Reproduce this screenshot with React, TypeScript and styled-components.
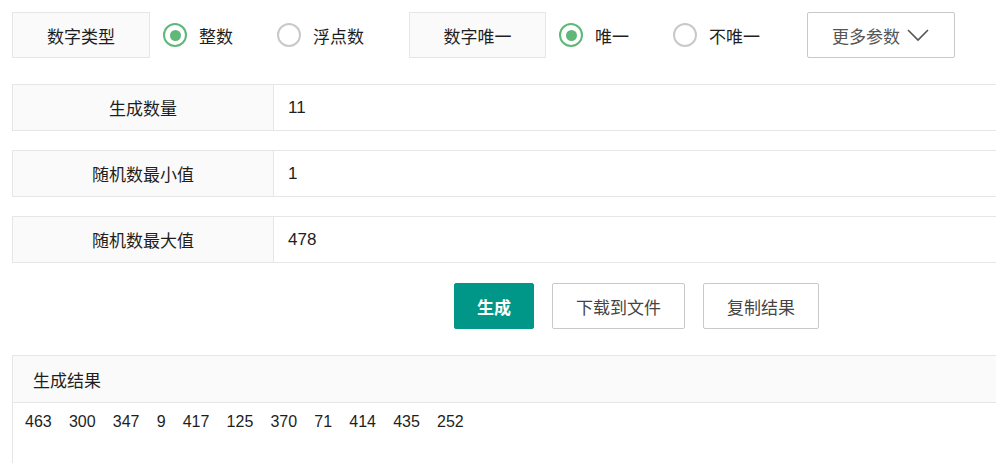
import React, { useState } from "react";
import styled, { createGlobalStyle } from "styled-components";

const GlobalStyle = createGlobalStyle`
  body {
    margin: 0;
    background: #fff;
    overflow: hidden;
    font-family: "Liberation Sans", "Noto Sans CJK SC", sans-serif;
    color: #1e1e1e;
  }
`;

const Page = styled.div`
  padding: 12px;
  width: 1100px;
`;

const Toolbar = styled.div`
  display: flex;
  align-items: center;
  gap: 14px;
  height: 46px;
`;

const FieldGroup = styled.div`
  display: flex;
  align-items: center;
`;

const FieldLabel = styled.div<{ $width: number }>`
  width: ${(p) => p.$width}px;
  height: 46px;
  box-sizing: border-box;
  display: flex;
  align-items: center;
  justify-content: center;
  background: #fafafa;
  border: 1px solid #e6e6e6;
  font-size: 17px;
`;

const RadioItem = styled.label`
  display: flex;
  align-items: center;
  gap: 12px;
  margin: 0 31px 0 13px;
  font-size: 17px;
  cursor: pointer;
`;

const RadioCircle = styled.span<{ $checked: boolean }>`
  width: 24px;
  height: 24px;
  box-sizing: border-box;
  border-radius: 50%;
  border: 2px solid ${(p) => (p.$checked ? "#5fb878" : "#c9c9c9")};
  display: flex;
  align-items: center;
  justify-content: center;

  &::after {
    content: "";
    width: 11px;
    height: 11px;
    border-radius: 50%;
    background: #5fb878;
    display: ${(p) => (p.$checked ? "block" : "none")};
  }
`;

const MoreButton = styled.button`
  width: 148px;
  height: 46px;
  margin-left: 2px;
  box-sizing: border-box;
  background: #fff;
  border: 1px solid #c9c9c9;
  border-radius: 2px;
  display: flex;
  align-items: center;
  justify-content: center;
  gap: 6px;
  font-family: inherit;
  font-size: 17px;
  color: #555;
  padding: 0;
`;

const Form = styled.div`
  margin-top: 26px;
  display: flex;
  flex-direction: column;
  gap: 19px;
`;

const FormRow = styled.div`
  display: flex;
  height: 47px;
  box-sizing: border-box;
  border: 1px solid #e6e6e6;
`;

const RowLabel = styled.div`
  width: 260px;
  flex-shrink: 0;
  display: flex;
  align-items: center;
  justify-content: center;
  background: #fafafa;
  border-right: 1px solid #e6e6e6;
  font-size: 17px;
`;

const RowValue = styled.div`
  display: flex;
  align-items: center;
  padding-left: 14px;
  font-size: 17px;
`;

const Actions = styled.div`
  display: flex;
  gap: 18px;
  margin-top: 20px;
  padding-left: 442px;
`;

const ActionButton = styled.button<{ $primary?: boolean }>`
  height: 46px;
  box-sizing: border-box;
  padding: 0 ${(p) => (p.$primary ? 22 : 23)}px;
  border-radius: 2px;
  border: 1px solid ${(p) => (p.$primary ? "#009688" : "#c9c9c9")};
  background: ${(p) => (p.$primary ? "#009688" : "#fff")};
  color: ${(p) => (p.$primary ? "#fff" : "#444")};
  font-family: inherit;
  font-size: 17px;
  font-weight: ${(p) => (p.$primary ? 700 : 400)};
`;

const ResultPanel = styled.div`
  margin-top: 26px;
  border: 1px solid #e6e6e6;
  border-bottom: none;
  height: 200px;
`;

const ResultHeader = styled.div`
  height: 46px;
  display: flex;
  align-items: center;
  padding-left: 20px;
  background: #fafafa;
  border-bottom: 1px solid #e6e6e6;
  font-size: 17px;
`;

const ResultBody = styled.div`
  padding: 8px 12px;
  font-size: 16px;
  line-height: 22px;
  white-space: pre;
  word-spacing: -0.15px;
`;

const Chevron = () => (
  <svg width="24" height="16" viewBox="0 0 24 16">
    <polyline
      points="2,3 12,13 22,3"
      fill="none"
      stroke="#555"
      strokeWidth="1.6"
    />
  </svg>
);

const numbers = [463, 300, 347, 9, 417, 125, 370, 71, 414, 435, 252];

export default function App() {
  const [numType, setNumType] = useState("int");
  const [unique, setUnique] = useState("yes");

  const rows = [
    { label: "生成数量", value: "11" },
    { label: "随机数最小值", value: "1" },
    { label: "随机数最大值", value: "478" },
  ];

  return (
    <Page>
      <GlobalStyle />
      <Toolbar>
        <FieldGroup>
          <FieldLabel $width={138}>数字类型</FieldLabel>
          <RadioItem onClick={() => setNumType("int")}>
            <RadioCircle $checked={numType === "int"} />
            整数
          </RadioItem>
          <RadioItem onClick={() => setNumType("float")}>
            <RadioCircle $checked={numType === "float"} />
            浮点数
          </RadioItem>
        </FieldGroup>
        <FieldGroup>
          <FieldLabel $width={137}>数字唯一</FieldLabel>
          <RadioItem onClick={() => setUnique("yes")}>
            <RadioCircle $checked={unique === "yes"} />
            唯一
          </RadioItem>
          <RadioItem onClick={() => setUnique("no")}>
            <RadioCircle $checked={unique === "no"} />
            不唯一
          </RadioItem>
        </FieldGroup>
        <MoreButton>
          更多参数
          <Chevron />
        </MoreButton>
      </Toolbar>

      <Form>
        {rows.map((r) => (
          <FormRow key={r.label}>
            <RowLabel>{r.label}</RowLabel>
            <RowValue>{r.value}</RowValue>
          </FormRow>
        ))}
      </Form>

      <Actions>
        <ActionButton $primary>生成</ActionButton>
        <ActionButton>下载到文件</ActionButton>
        <ActionButton>复制结果</ActionButton>
      </Actions>

      <ResultPanel>
        <ResultHeader>生成结果</ResultHeader>
        <ResultBody>{numbers.join("    ")}</ResultBody>
      </ResultPanel>
    </Page>
  );
}
